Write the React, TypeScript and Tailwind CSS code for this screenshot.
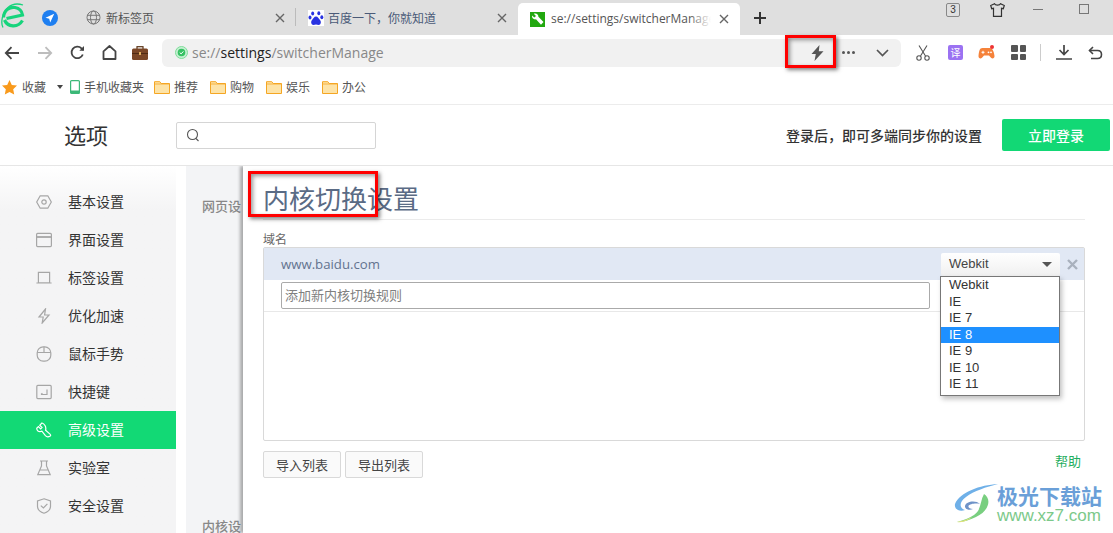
import { ReactNode } from "react";

const cjk = "font-['Noto_Sans_CJK_SC','Liberation_Sans',sans-serif]";

const Ico = ({ children }: { children: ReactNode }) => (
  <svg width={16} height={16} viewBox="0 0 16 16" fill="none" stroke="#a6a6a6" strokeWidth="1.2" className="shrink-0">
    {children}
  </svg>
);

const CloseX = ({ className = "" }: { className?: string }) => (
  <svg width="10" height="10" viewBox="0 0 10 10" stroke="#666" strokeWidth="1.4" className={className}>
    <path d="M1 1l8 8M9 1L1 9" />
  </svg>
);

const Folder = () => (
  <svg width="16" height="13" viewBox="0 0 16 13" className="shrink-0">
    <path d="M.5 12.5V.7h5.3l1.4 1.8h8.3v10z" fill="#fde3a7" stroke="#f5a623" />
    <path d="M.5 3h15" stroke="#f5a623" strokeWidth="0.8" />
  </svg>
);

const menu: { label: string; icon: ReactNode; active?: boolean }[] = [
  {
    label: "基本设置",
    icon: (
      <Ico>
        <path d="M4.2 1.8h7.6L15.3 8l-3.5 6.2H4.2L.7 8z" />
        <circle cx="8" cy="8" r="2.2" />
      </Ico>
    ),
  },
  {
    label: "界面设置",
    icon: (
      <Ico>
        <rect x="0.6" y="1.4" width="14.8" height="13.2" rx="1" />
        <path d="M.6 5h14.8" strokeWidth="1.8" />
      </Ico>
    ),
  },
  {
    label: "标签设置",
    icon: (
      <Ico>
        <path d="M2.4 2.4h11.2v10.4H2.4zM.4 13h15.2" />
      </Ico>
    ),
  },
  {
    label: "优化加速",
    icon: (
      <Ico>
        <path d="M9.5 1L3 9h4.2l-1 6L13 7H8.6z" />
      </Ico>
    ),
  },
  {
    label: "鼠标手势",
    icon: (
      <Ico>
        <rect x="1.2" y="0.8" width="13.6" height="14.4" rx="6" />
        <path d="M1.2 6.5h13.6M8 .8v5.7" />
      </Ico>
    ),
  },
  {
    label: "快捷键",
    icon: (
      <Ico>
        <rect x="0.8" y="1.4" width="14.4" height="13.2" rx="1" />
        <path d="M11 5.5v5H5M5 10.5l1.4-1.2" />
      </Ico>
    ),
  },
  {
    label: "高级设置",
    active: true,
    icon: (
      <svg width="16" height="16" viewBox="0 0 16 16" fill="none" stroke="#fff" strokeWidth="1.2" className="shrink-0">
        <path d="M6 1L3.800 3.200l2.200 2.300-1.300 1.300-2.300-2.300L.7 6.300c0 2.200 1.800 3.700 4.300 3.100l.9-.3 3.500 4.600c1.200 1.300 3.100 1.400 4.800.3.700-.6.500-1.300-.2-1.900L9.600 8.200c.4-1.600.3-3.200-.6-4.700C8.200 2.200 7.200 1.300 6 1z" />
      </svg>
    ),
  },
  {
    label: "实验室",
    icon: (
      <Ico>
        <path d="M4 1h8M5.500 1v5L1.800 14.600h12.400L10.500 6V1M4 10h8" />
      </Ico>
    ),
  },
  {
    label: "安全设置",
    icon: (
      <Ico>
        <path d="M8 .8l6.500 2.200v5.500c0 3.300-3.300 5.600-6.500 6.700-3.200-1.100-6.500-3.400-6.500-6.700V3z" />
        <path d="M4.800 7.600L7.400 10l4-4.200" />
      </Ico>
    ),
  },
];

const engines = ["Webkit", "IE", "IE 7", "IE 8", "IE 9", "IE 10", "IE 11"];

function TabBar() {
  return (
    <div className="flex h-[35px] items-end bg-[#dfdfdf]">
      <div className="relative h-[35px] w-[72px] shrink-0">
        <svg width="25" height="28" viewBox="0 0 25 28" className="absolute left-[1px] top-[2px]" fill="none" stroke="#17d47c">
          <path d="M2.500 15.500C3 8 9 4.500 14 5.500c4.500.8 7 4 7.500 7.500L5.500 16.500" strokeWidth="3.200" />
          <path d="M21.500 18.500c-2.500 4-6 5.500-9.500 5.300-4-.2-7-2.300-8.500-5.800" strokeWidth="3.200" />
          <path d="M2 25.500C-.5 21 1 11 7 5.500 11 2 16 1 22 3" strokeWidth="1.300" />
        </svg>
        <svg width="16" height="16" viewBox="0 0 16 16" className="absolute left-[42px] top-[10px]">
          <circle cx="8" cy="8" r="8" fill="#1f7ff0" />
          <path d="M12.200 3.800L3.500 7.700l3.700 1.100 1 3.700z" fill="#fff" />
        </svg>
      </div>

      <div className={`flex h-[35px] w-[223px] shrink-0 items-center pl-[14px] pr-[10px] text-[12px] text-[#555] ${cjk}`}>
        <svg width="15" height="15" viewBox="0 0 15 15" fill="none" stroke="#777" className="shrink-0">
          <circle cx="7.500" cy="7.500" r="6.500" />
          <ellipse cx="7.500" cy="7.500" rx="3" ry="6.500" />
          <path d="M1 5.300h13M1 9.700h13" />
        </svg>
        <span className="ml-[5px]">新标签页</span>
        <CloseX className="ml-auto" />
      </div>
      <div className="mb-[9px] h-[18px] w-px shrink-0 bg-[#bbb]" />

      <div className={`flex h-[35px] w-[222px] shrink-0 items-center pl-[12px] pr-[11px] text-[12px] text-[#4a5a78] ${cjk}`}>
        <svg width="16" height="16" viewBox="0 0 16 16" className="shrink-0">
          <rect width="16" height="16" fill="#fff" />
          <g fill="#2932e1">
            <ellipse cx="4.700" cy="3.500" rx="1.500" ry="2" />
            <ellipse cx="10.800" cy="3.300" rx="1.500" ry="2" />
            <ellipse cx="2" cy="7.500" rx="1.500" ry="2" />
            <ellipse cx="13.800" cy="7.300" rx="1.500" ry="2" />
            <path d="M8 6.500c-2 0-2.500 2-4 3.500-1.500 1.500-1 5 1.500 5 1 0 1.500-.4 2.500-.4s1.500.4 2.500.4c2.500 0 3-3.500 1.500-5C10.500 8.500 10 6.500 8 6.500z" />
          </g>
        </svg>
        <span className="ml-[4px]">百度一下，你就知道</span>
        <CloseX className="ml-auto" />
      </div>

      <div className="flex h-[32px] w-[222px] shrink-0 items-center rounded-t-[5px] bg-white pl-[12px] pr-[11px]">
        <svg width="15" height="15" viewBox="0 0 15 15" className="shrink-0">
          <rect width="15" height="15" fill="#22a80f" />
          <path d="M2 3.500L4.300 5.600 6 4 3.800 1.700c2.400-.9 4.700.4 4.600 3L13.500 10 11 12.700 6 7.300C3.600 7.800 1.600 6 2 3.500z" fill="#fff" />
        </svg>
        <span className="relative ml-[6px] w-[160px] overflow-hidden whitespace-nowrap font-['Open_Sans',sans-serif] text-[12px] text-[#555]">
          se://settings/switcherManage
          <span className="absolute right-0 top-0 h-full w-[22px] bg-gradient-to-r from-transparent to-white" />
        </span>
        <CloseX className="ml-auto" />
      </div>

      <div className="flex h-[35px] flex-1 items-start">
        <svg width="14" height="14" viewBox="0 0 14 14" stroke="#333" strokeWidth="2" className="ml-[13px] mt-[11px] shrink-0">
          <path d="M7 1v12M1 7h12" />
        </svg>
        <div className="ml-[179px] mt-[3px] flex h-[14px] w-[14px] items-center justify-center rounded-[2px] border border-[#888] font-['Liberation_Sans',sans-serif] text-[10px] leading-none text-[#333]">
          3
        </div>
        <svg width="15" height="14" viewBox="0 0 15 14" fill="none" stroke="#333" strokeWidth="1.200" className="ml-[30px] mt-[3px] shrink-0">
          <path d="M4.500.7L.7 2.500l1 3.200 1.800-.4v8h8V5.300l1.800.4 1-3.200L10.500.7C9.800 2.500 5.200 2.500 4.500.7z" />
        </svg>
        <div className="ml-[28px] mt-[9px] h-px w-[10px] bg-[#777]" />
        <div className="ml-[36px] mt-[4px] h-[10px] w-[10px] border border-[#777]" />
      </div>
    </div>
  );
}

function ToolBar() {
  return (
    <div className="flex h-[35px] items-center bg-white">
      <svg width="16" height="14" viewBox="0 0 16 14" fill="none" stroke="#444" strokeWidth="1.800" className="ml-[4px]">
        <path d="M15 7H2M7.500 1.200L1.800 7l5.700 5.800" />
      </svg>
      <svg width="16" height="14" viewBox="0 0 16 14" fill="none" stroke="#bdbdbd" strokeWidth="1.800" className="ml-[17px]">
        <path d="M1 7h13M8.500 1.200L14.200 7l-5.700 5.800" />
      </svg>
      <svg width="15" height="15" viewBox="0 0 15 15" fill="none" stroke="#444" strokeWidth="1.800" className="ml-[17px]">
        <path d="M12.800 9.500A5.800 5.800 0 1 1 11.500 3.300L13.500 5" />
        <path d="M14 1v4.800H9.300z" fill="#444" stroke="none" />
      </svg>
      <svg width="15" height="15" viewBox="0 0 15 15" fill="none" stroke="#444" strokeWidth="1.800" className="ml-[17px]">
        <path d="M1.500 14V6.300L7.500 1l6 5.300V14z" strokeLinejoin="round" />
      </svg>
      <svg width="16" height="14" viewBox="0 0 16 14" className="ml-[15px]">
        <rect x="5" y="0.700" width="6" height="3" fill="none" stroke="#5b3417" strokeWidth="1.200" />
        <rect y="2.500" width="16" height="11.500" rx="1.500" fill="#7a4626" />
        <rect y="7" width="16" height="1" fill="#4f2a12" />
        <rect x="7" y="6" width="2" height="3" fill="#e0b060" />
      </svg>

      <div className="ml-[14px] flex h-[28px] w-[739px] items-center rounded-[6px] bg-[#f1f1f1] pl-[13px]">
        <svg width="13" height="13" viewBox="0 0 13 13" className="shrink-0">
          <circle cx="6.500" cy="6.500" r="6" fill="#c5f0d2" stroke="#7fdc9a" />
          <circle cx="6.500" cy="6.500" r="3.800" fill="#35c163" />
          <path d="M4.700 6.500l1.400 1.400 2.300-2.500" fill="none" stroke="#fff" />
        </svg>
        <span className="ml-[4px] font-['Open_Sans',sans-serif] text-[14px] text-[#888]">
          se://<span className="text-[#222]">settings</span>/switcherManage
        </span>
        <svg width="13" height="16" viewBox="0 0 13 16" className="ml-auto mr-[18px]">
          <path d="M8.500 0L.5 9h4.300L3.500 16l9-9.800H7.800z" fill="#555" />
        </svg>
        <div className="mr-[21px] flex gap-[2px]">
          <span className="h-[3px] w-[3px] rounded-full bg-[#555]" />
          <span className="h-[3px] w-[3px] rounded-full bg-[#555]" />
          <span className="h-[3px] w-[3px] rounded-full bg-[#555]" />
        </div>
        <svg width="13" height="8" viewBox="0 0 13 8" fill="none" stroke="#555" strokeWidth="1.700" className="mr-[12px]">
          <path d="M1 1l5.500 5.500L12 1" />
        </svg>
      </div>

      <svg width="14" height="16" viewBox="0 0 14 16" fill="none" stroke="#555" strokeWidth="1.100" className="ml-[15px]">
        <path d="M3 .5l6.500 10.500M11 .5L4.500 11" />
        <circle cx="3" cy="13" r="2.200" />
        <circle cx="11" cy="13" r="2.200" />
      </svg>
      <div className={`ml-[18px] flex h-[15px] w-[15px] items-center justify-center rounded-[2px] bg-[#9b72f2] text-[10px] leading-none text-white ${cjk}`}>
        译
      </div>
      <svg width="17" height="16" viewBox="0 0 17 16" className="ml-[15px]">
        <path d="M4.500 3h7c3 0 4.500 3.500 5 8 .2 2.500-2.200 3.200-3.500 1.800L11 10.500H6L4 12.800C2.700 14.200.3 13.500.5 11c.5-4.500 1-8 4-8z" fill="#f5823a" />
        <path d="M3.500 7.300h3M5 5.800v3" stroke="#fff" />
        <circle cx="10.500" cy="7.300" r=".9" fill="#fff" />
        <circle cx="13" cy="7.300" r=".9" fill="#fff" />
        <circle cx="14" cy="2" r="2" fill="#ee3333" />
      </svg>
      <div className="ml-[16px] grid grid-cols-2 gap-[2px]">
        <span className="h-[6.500px] w-[6.500px] rounded-[1px] bg-[#555]" />
        <span className="h-[6.500px] w-[6.500px] rounded-[1px] bg-[#555]" />
        <span className="h-[6.500px] w-[6.500px] rounded-[1px] bg-[#555]" />
        <span className="h-[6.500px] w-[6.500px] rounded-[1px] bg-[#555]" />
      </div>
      <div className="ml-[14px] h-[17px] w-px bg-[#ccc]" />
      <svg width="16" height="15" viewBox="0 0 16 15" fill="none" stroke="#444" strokeWidth="1.700" className="ml-[15px]">
        <path d="M8 0v9M3.500 5L8 9.500 12.500 5M0 14h16" />
      </svg>
      <svg width="15" height="14" viewBox="0 0 15 14" fill="none" stroke="#444" strokeWidth="1.600" className="ml-[16px]">
        <path d="M1.500 4.500h8c2.500 0 4 1.800 4 4s-1.500 4-4 4H3" />
        <path d="M5 1L1.500 4.500 5 8" />
      </svg>
    </div>
  );
}

function BookmarkBar() {
  const folders = ["推荐", "购物", "娱乐", "办公"];
  return (
    <div className={`flex h-[35px] items-center border-b border-[#ececec] bg-white pl-[2px] text-[12px] text-[#555] ${cjk}`}>
      <svg width="15" height="15" viewBox="0 0 15 15" className="shrink-0">
        <path d="M7.500 0l2.300 4.900 5.200.7-3.800 3.600 1 5.300-4.700-2.600-4.700 2.600 1-5.300L0 5.600l5.200-.7z" fill="#f99a1c" />
      </svg>
      <span className="ml-[5px]">收藏</span>
      <span className="ml-[11px] h-0 w-0 border-x-[3.500px] border-t-[4px] border-x-transparent border-t-[#444]" />
      <svg width="10" height="14" viewBox="0 0 10 14" className="ml-[7px] shrink-0">
        <rect x="0.600" y="0.600" width="8.800" height="12.800" rx="1" fill="#fff" stroke="#3cb878" strokeWidth="1.200" />
        <rect x="0.600" y="10.500" width="8.800" height="3" fill="#3cb878" />
      </svg>
      <span className="ml-[4px]">手机收藏夹</span>
      <div className="ml-[10px] flex gap-[12px]">
        {folders.map((name) => (
          <div key={name} className="flex items-center gap-[4px]">
            <Folder />
            <span>{name}</span>
          </div>
        ))}
      </div>
    </div>
  );
}

function PageHeader() {
  return (
    <div className={`relative z-20 flex h-[61px] shrink-0 items-center border-b border-[#e6e6e6] bg-white ${cjk}`}>
      <div className="ml-[64px] w-[112px] shrink-0 pb-[2px] text-[22px] text-[#333]">选项</div>
      <div className="flex h-[27px] w-[200px] shrink-0 items-center rounded-[2px] border border-[#d5d5d5] pl-[9px]">
        <svg width="14" height="14" viewBox="0 0 14 14" fill="none" stroke="#555" strokeWidth="1.100">
          <circle cx="6.500" cy="6.500" r="5" />
          <path d="M10 10.500l2.500 2.500" />
        </svg>
      </div>
      <span className="ml-auto text-[14px] font-medium text-[#333]">登录后，即可多端同步你的设置</span>
      <div className="ml-[20px] mr-[3px] flex h-[32px] w-[108px] items-center justify-center rounded-[2px] bg-[#12d875] text-[14px] font-medium text-white">
        立即登录
      </div>
    </div>
  );
}

function Sidebar() {
  return (
    <div className={`h-full w-[176px] shrink-0 bg-gradient-to-b from-white to-[#f4f4f5] to-[45px] pt-[17px] text-[14px] text-[#333] ${cjk}`}>
      {menu.map((item) => (
        <div
          key={item.label}
          className={`flex h-[38px] items-center gap-[16px] pl-[36px] ${item.active ? "bg-[#12d975] text-white" : ""}`}
        >
          {item.icon}
          <span className="pb-[2px]">{item.label}</span>
        </div>
      ))}
    </div>
  );
}

function EnginePanel() {
  return (
    <div className={`relative z-10 flex h-full flex-1 flex-col bg-white pl-[20px] pr-[28px] shadow-[-3px_0_3px_rgba(0,0,0,0.3)] ${cjk}`}>
      <div className="mt-[13px] h-[41px] border-b border-[#ebebeb] text-[26px] leading-[37px] text-[#5a6b85]">内核切换设置</div>
      <div className="mt-[11px] h-[16px] text-[12px] leading-[16px] text-[#666]">域名</div>

      <div className="h-[194px] rounded-[2px] border border-[#d9d9d9]">
        <div className="flex h-[32px] items-center bg-[#e1e8f4] pl-[17px]">
          <span className="pt-[2px] font-['Open_Sans',sans-serif] text-[13.2px] text-[#63738f]">www.baidu.com</span>
          <div className="ml-auto flex h-[23px] w-[119px] items-center rounded-[2px] bg-gradient-to-b from-white to-[#f0f0f0] pl-[8px] pr-[8px] font-['Liberation_Sans',sans-serif] text-[13px] text-[#444]">
            Webkit
            <span className="ml-auto h-0 w-0 border-x-[5px] border-t-[5px] border-x-transparent border-t-[#555]" />
          </div>
          <svg width="11" height="11" viewBox="0 0 11 11" stroke="#a9b1bd" strokeWidth="2.400" className="ml-[7px] mr-[6px]">
            <path d="M1 1l9 9M10 1l-9 9" />
          </svg>
        </div>
        <div className="flex h-[32px] items-center border-b border-[#e8e8e8] pl-[17px]">
          <div className="flex h-[27px] w-[649px] items-center rounded-[2px] border border-[#aaa] pb-[2px] pl-[3px] text-[13px] text-[#808080]">
            添加新内核切换规则
          </div>
        </div>
      </div>

      <div className="mt-[10px] flex items-center gap-[4px] text-[13px] text-[#444]">
        <div className="flex h-[27px] w-[78px] items-center justify-center rounded-[2px] border border-[#d9d9d9] bg-[#fafafa]">导入列表</div>
        <div className="flex h-[27px] w-[78px] items-center justify-center rounded-[2px] border border-[#d9d9d9] bg-[#fafafa]">导出列表</div>
        <span className="ml-auto mr-[4px] self-start text-[13px] text-[#1fae5f]">帮助</span>
      </div>
    </div>
  );
}

export default function App() {
  return (
    <div className="relative flex h-[533px] w-[1113px] flex-col overflow-hidden bg-white">
      <TabBar />
      <ToolBar />
      <BookmarkBar />
      <PageHeader />

      <div className="flex min-h-0 flex-1 bg-white">
        <Sidebar />
        <div className={`ml-[10px] flex h-full w-[57px] shrink-0 flex-col overflow-hidden bg-[#f3f4f6] pl-[16px] text-[13px] font-medium text-[#888] ${cjk}`}>
          <div className="mt-[30px] whitespace-nowrap">网页设</div>
          <div className="mt-[268px] h-px w-full bg-[#e8e8e8]" />
          <div className="mt-[32px] whitespace-nowrap">内核设</div>
        </div>
        <EnginePanel />
      </div>

      {/* open engine list, drops over the rule rows */}
      <div className="absolute left-[940px] top-[276px] z-20 w-[120px] border border-[#777] bg-white pb-[2px] font-['Liberation_Sans',sans-serif] text-[13px] leading-[16.500px] text-[#333] shadow-[2px_3px_5px_rgba(0,0,0,0.25)]">
        {engines.map((name) => (
          <div key={name} className={`pl-[8px] ${name === "IE 8" ? "bg-[#1e90ff] text-white" : ""}`}>
            {name}
          </div>
        ))}
      </div>

      {/* red callout boxes */}
      <div className="absolute left-[785px] top-[35px] z-30 h-[33px] w-[51px] border-[3px] border-[#f00] shadow-[2px_2px_4px_rgba(0,0,0,0.5),inset_2px_2px_4px_rgba(0,0,0,0.4)]" />
      <div className="absolute left-[248px] top-[171px] z-30 h-[46px] w-[130px] border-[3px] border-[#f00] shadow-[2px_2px_4px_rgba(0,0,0,0.5),inset_2px_2px_4px_rgba(0,0,0,0.4)]" />

      {/* site stamp, bottom right */}
      <div className={`absolute left-[954px] top-[482px] z-30 flex items-center ${cjk}`}>
        <svg width="44" height="42" viewBox="0 0 44 42" fill="none">
          <path d="M44 2C26 3 6 10 1 22c-1 5 4 8 10 6C5 26 5 20 12 15 20 9 32 5 44 2z" fill="#6fb0e8" />
          <path d="M26 22c-4-4-14-3-15 2-.5 3 4 5 8 3-3 0-5-1-4.500-3 1-2 7-3 11.500-2z" fill="#6f93c8" />
          <path d="M30 12c8 5 5 17-8 23-6 3-13 5-19 5 7-2 17-5 21-11 3-5 3-12 6-17z" fill="#79cf80" />
          <path d="M3 40c6-1 11-3 15-5-3 3-9 6-15 5z" fill="#e4e37a" />
        </svg>
        <div className="-ml-[1px] flex flex-col">
          <span className="text-[21px] font-bold leading-[24px] text-[#6a9fd8]">极光下载站</span>
          <span className="mt-[1px] font-['Liberation_Sans',sans-serif] text-[17px] leading-[16px] text-[#7cc98a]">www.xz7.com</span>
        </div>
      </div>
    </div>
  );
}
